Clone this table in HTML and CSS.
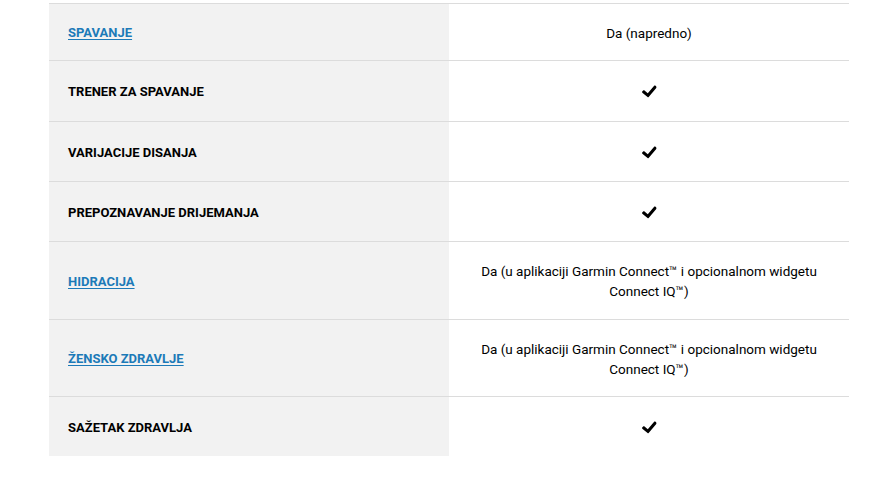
FILE: index.html
```html
<!DOCTYPE html>
<html lang="hr">
<head>
<meta charset="utf-8">
<link rel="stylesheet" href="styles.css">
</head>
<body>
<div class="table">
  <div class="row row--first">
    <div class="label"><a href="#" class="link">SPAVANJE</a></div>
    <div class="value">Da (napredno)</div>
  </div>
  <div class="row row--second">
    <div class="label">TRENER ZA SPAVANJE</div>
    <div class="value"><svg class="check" viewBox="0 0 512 512"><path d="M173.898 439.404l-166.4-166.4c-9.997-9.997-9.997-26.206 0-36.204l36.203-36.204c9.997-9.998 26.207-9.998 36.204 0L192 312.69 432.095 72.596c9.997-9.997 26.207-9.997 36.204 0l36.203 36.204c9.997 9.997 9.997 26.206 0 36.204l-294.4 294.401c-9.998 9.997-26.207 9.997-36.204-.001z"/></svg></div>
  </div>
  <div class="row">
    <div class="label">VARIJACIJE DISANJA</div>
    <div class="value"><svg class="check" viewBox="0 0 512 512"><path d="M173.898 439.404l-166.4-166.4c-9.997-9.997-9.997-26.206 0-36.204l36.203-36.204c9.997-9.998 26.207-9.998 36.204 0L192 312.69 432.095 72.596c9.997-9.997 26.207-9.997 36.204 0l36.203 36.204c9.997 9.997 9.997 26.206 0 36.204l-294.4 294.401c-9.998 9.997-26.207 9.997-36.204-.001z"/></svg></div>
  </div>
  <div class="row">
    <div class="label">PREPOZNAVANJE DRIJEMANJA</div>
    <div class="value"><svg class="check" viewBox="0 0 512 512"><path d="M173.898 439.404l-166.4-166.4c-9.997-9.997-9.997-26.206 0-36.204l36.203-36.204c9.997-9.998 26.207-9.998 36.204 0L192 312.69 432.095 72.596c9.997-9.997 26.207-9.997 36.204 0l36.203 36.204c9.997 9.997 9.997 26.206 0 36.204l-294.4 294.401c-9.998 9.997-26.207 9.997-36.204-.001z"/></svg></div>
  </div>
  <div class="row row--tall">
    <div class="label"><a href="#" class="link">HIDRACIJA</a></div>
    <div class="value">Da (u aplikaciji Garmin Connect™ i opcionalnom widgetu Connect IQ™)</div>
  </div>
  <div class="row row--tall2">
    <div class="label"><a href="#" class="link">ŽENSKO ZDRAVLJE</a></div>
    <div class="value">Da (u aplikaciji Garmin Connect™ i opcionalnom widgetu Connect IQ™)</div>
  </div>
  <div class="row row--last">
    <div class="label">SAŽETAK ZDRAVLJA</div>
    <div class="value"><svg class="check" viewBox="0 0 512 512"><path d="M173.898 439.404l-166.4-166.4c-9.997-9.997-9.997-26.206 0-36.204l36.203-36.204c9.997-9.998 26.207-9.998 36.204 0L192 312.69 432.095 72.596c9.997-9.997 26.207-9.997 36.204 0l36.203 36.204c9.997 9.997 9.997 26.206 0 36.204l-294.4 294.401c-9.998 9.997-26.207 9.997-36.204-.001z"/></svg></div>
  </div>
</div>
</body>
</html>
```

FILE: styles.css
```css
html, body {
  margin: 0;
  padding: 0;
  background: #fff;
}

body {
  padding: 3px 37px 0 49px;
  font-family: Roboto, "Liberation Sans", Arial, sans-serif;
  color: #000;
}

.table {
  width: 800px;
  display: flex;
  flex-direction: column;
}

.row {
  display: grid;
  grid-template-columns: 400px 400px;
  height: 60px;
  box-sizing: border-box;
  border-top: 1px solid #dcdcdc;
}

.row--first { height: 57px; }
.row--second { height: 61px; }
.row--tall { height: 78px; }
.row--tall2 { height: 77px; }
.row--last { height: 60px; }

.label {
  background: #f2f2f2;
  display: flex;
  align-items: center;
  padding: 1px 20px 0 19px;
  font-size: 13px;
  font-weight: 700;
  text-transform: uppercase;
}

.link {
  color: #1c7ab8;
  text-decoration: underline;
  text-underline-offset: 2px;
}

.value {
  display: flex;
  align-items: center;
  justify-content: center;
  text-align: center;
  padding: 1px 20px 0;
  font-size: 13.5px;
  line-height: 20px;
}

.check {
  width: 15px;
  height: 15px;
  fill: #000;
  transform: rotate(-5deg);
}
```
